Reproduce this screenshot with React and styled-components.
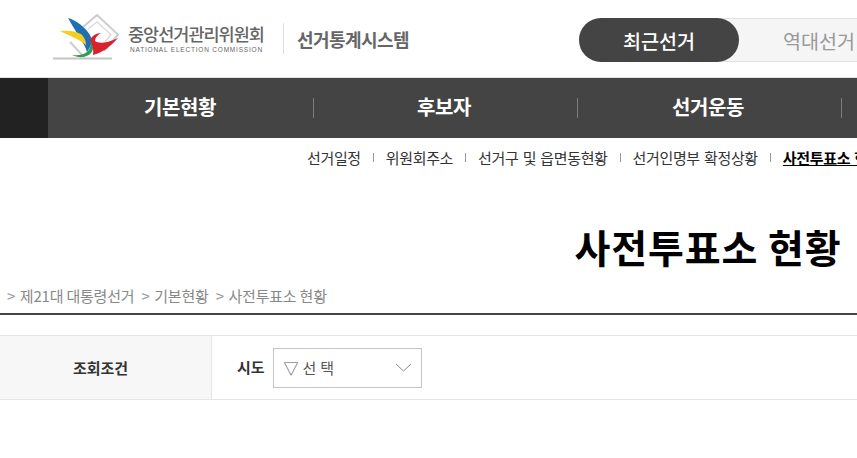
import { createGlobalStyle, styled } from "styled-components"

const GlobalStyle = createGlobalStyle`
html, body {
    margin: 0;
    padding: 0;
    background: #fff;
    overflow: hidden;
}
body {
    font-family: "Noto Sans CJK KR", "Noto Sans", sans-serif;
}
`

const Page = styled.div`
width: 1416px;
height: 458px;
overflow: hidden;
`

const Header = styled.header`
height: 77px;
display: flex;
align-items: center;
padding-left: 52px;
border-bottom: 1px solid #e4e4e4;
`

const Logo = styled.div`
display: flex;
align-items: center;
width: 527px;
`

const LogoText = styled.div`
margin-left: 4px;
width: 137px;
`

const LogoTitle = styled.div`
font-size: 17.5px;
line-height: 21px;
font-weight: 500;
letter-spacing: -1px;
color: #666;
white-space: nowrap;
`

const LogoSub = styled.div`
margin: 1px 0 0 2px;
font-family: "Liberation Sans", sans-serif;
font-size: 6.5px;
line-height: 9px;
font-weight: 400;
letter-spacing: 0.8px;
color: #666;
white-space: nowrap;
`

const LogoDivider = styled.span`
width: 1px;
height: 31px;
margin: 0 13px 0 18px;
background: #ddd;
`

const SystemName = styled.div`
font-size: 18px;
font-weight: 700;
letter-spacing: -0.55px;
color: #666;
white-space: nowrap;
`

const Toggle = styled.div`
display: flex;
height: 44px;
width: 320px;
margin-top: 3px;
background: #f5f5f5;
border-radius: 22px;
box-shadow: inset 0 0 0 1px #e2e2e2;
`

const ToggleItem = styled.div`
width: 160px;
display: flex;
align-items: center;
justify-content: center;
border-radius: 22px;
font-size: 19.600px;
font-weight: ${(p) => (p.$active ? 500 : 400)};
color: ${(p) => (p.$active ? "#fff" : "#999")};
background: ${(p) => (p.$active ? "#444" : "transparent")};
`

const Nav = styled.nav`
height: 60px;
display: flex;
background: #444;
`

const NavCorner = styled.div`
width: 48px;
background: #222;
`

const NavItem = styled.div`
width: 264px;
height: 60px;
box-sizing: border-box;
padding-bottom: 3px;
display: flex;
align-items: center;
justify-content: center;
position: relative;
font-size: 20px;
font-weight: 700;
letter-spacing: -0.4px;
color: #fff;
&::after {
    content: "";
    position: absolute;
    right: -2px;
    top: 20px;
    width: 1px;
    height: 20px;
    background: #7c7c7c;
}
`

const SubNav = styled.div`
height: 41px;
box-sizing: border-box;
padding: 0 0 2px 307px;
display: flex;
align-items: center;
font-size: 15px;
letter-spacing: -0.35px;
word-spacing: 1.2px;
color: #333;
white-space: nowrap;
`

const SubItem = styled.span`
font-weight: ${(p) => (p.$active ? 700 : 400)};
color: ${(p) => (p.$active ? "#000" : "#333")};
text-decoration: ${(p) => (p.$active ? "underline" : "none")};
`

const SubSep = styled.i`
width: 1px;
height: 9px;
margin: 0 12px;
background: #999;
`

const Title = styled.h1`
margin: 0;
padding-top: 42px;
height: 92px;
box-sizing: border-box;
font-size: 39px;
line-height: 50px;
font-weight: 700;
letter-spacing: 0.9px;
color: #000;
text-align: center;
`

const Crumbs = styled.div`
height: 44px;
box-sizing: border-box;
padding: 13px 0 0 7px;
line-height: 24px;
font-size: 15px;
letter-spacing: -0.2px;
color: #888;
white-space: nowrap;
border-bottom: 2px solid #444;
`

const Crumb = styled.span`
margin-right: 7px;
`

const CrumbArrow = styled.span`
margin-right: 1.500px;
color: #999;
`

const Search = styled.div`
margin-top: 20px;
height: 63px;
display: flex;
border-top: 1px solid #e5e5e5;
border-bottom: 1px solid #e5e5e5;
`

const SearchLabel = styled.div`
width: 211px;
display: flex;
align-items: center;
justify-content: center;
background: #f7f7f7;
border-right: 1px solid #e5e5e5;
font-size: 15px;
font-weight: 700;
color: #333;
& > span {
    margin-right: 10px;
}
`

const SearchBody = styled.div`
display: flex;
align-items: center;
padding-left: 25px;
`

const FieldLabel = styled.label`
font-size: 15px;
font-weight: 700;
color: #333;
margin: 0 8px 3px 0;
`

const Select = styled.div`
width: 149px;
height: 40px;
box-sizing: border-box;
border: 1px solid #c4c4c4;
display: flex;
align-items: center;
justify-content: space-between;
padding: 0 9px 0 10px;
font-size: 15px;
letter-spacing: 0.3px;
color: #555;
svg {
    display: block;
}
`

const BirdLogo = () => (
    <svg width="72" height="50" viewBox="0 0 72 50">
        <path d="M1 44.500H60" stroke="#c4c4c4" strokeWidth="2" />
        <path d="M18 28L33 44M31 13L45 1L66 20.500L52 37" fill="none" stroke="#cdcdcd" strokeWidth="2" />
        <path d="M36 15L45 8L59 20.500L49 33" fill="none" stroke="#dcdcdc" strokeWidth="1.500" />
        <path d="M16 4C24 6 33 13 38 21C41 27 39 33 35 38C33 30 26 22 16 4Z" fill="#1f6fb5" />
        <path d="M8 17C16 16 24 17 29 20C32 23 34 26 34 31C27 25 18 22 8 17Z" fill="#f2cf1d" />
        <path d="M20 41C26 42 32 41 36 37C39 34 39 29 38 26C42 31 42 37 38 40C33 44 26 44 20 41Z" fill="#2f9d58" />
        <path d="M38 26C40 22 44 19 49 19C45 21 43 24 43 27C47 30 56 29 66 24C58 33 50 39 41 41C42 36 40 30 38 26Z" fill="#d8232f" />
    </svg>
)

const App = () => {
    return (
        <Page>
            <GlobalStyle />
            <Header>
                <Logo>
                    <BirdLogo />
                    <LogoText>
                        <LogoTitle>중앙선거관리위원회</LogoTitle>
                        <LogoSub>NATIONAL ELECTION COMMISSION</LogoSub>
                    </LogoText>
                    <LogoDivider />
                    <SystemName>선거통계시스템</SystemName>
                </Logo>
                <Toggle>
                    <ToggleItem $active>최근선거</ToggleItem>
                    <ToggleItem>역대선거</ToggleItem>
                </Toggle>
            </Header>
            <Nav>
                <NavCorner />
                <NavItem>기본현황</NavItem>
                <NavItem>후보자</NavItem>
                <NavItem>선거운동</NavItem>
            </Nav>
            <SubNav>
                <SubItem>선거일정</SubItem>
                <SubSep />
                <SubItem>위원회주소</SubItem>
                <SubSep />
                <SubItem>선거구 및 읍면동현황</SubItem>
                <SubSep />
                <SubItem>선거인명부 확정상황</SubItem>
                <SubSep />
                <SubItem $active>사전투표소 현황</SubItem>
            </SubNav>
            <Title>사전투표소 현황</Title>
            <Crumbs>
                <Crumb><CrumbArrow>&gt;</CrumbArrow> 제21대 대통령선거</Crumb>
                <Crumb><CrumbArrow>&gt;</CrumbArrow> 기본현황</Crumb>
                <Crumb><CrumbArrow>&gt;</CrumbArrow> 사전투표소 현황</Crumb>
            </Crumbs>
            <Search>
                <SearchLabel><span>조회조건</span></SearchLabel>
                <SearchBody>
                    <FieldLabel>시도</FieldLabel>
                    <Select>
                        <span>▽ 선 택</span>
                        <svg width="17" height="9" viewBox="0 0 17 9">
                            <path d="M1 1L8.500 8L16 1" fill="none" stroke="#888" />
                        </svg>
                    </Select>
                </SearchBody>
            </Search>
        </Page>
    )
}

export default App
